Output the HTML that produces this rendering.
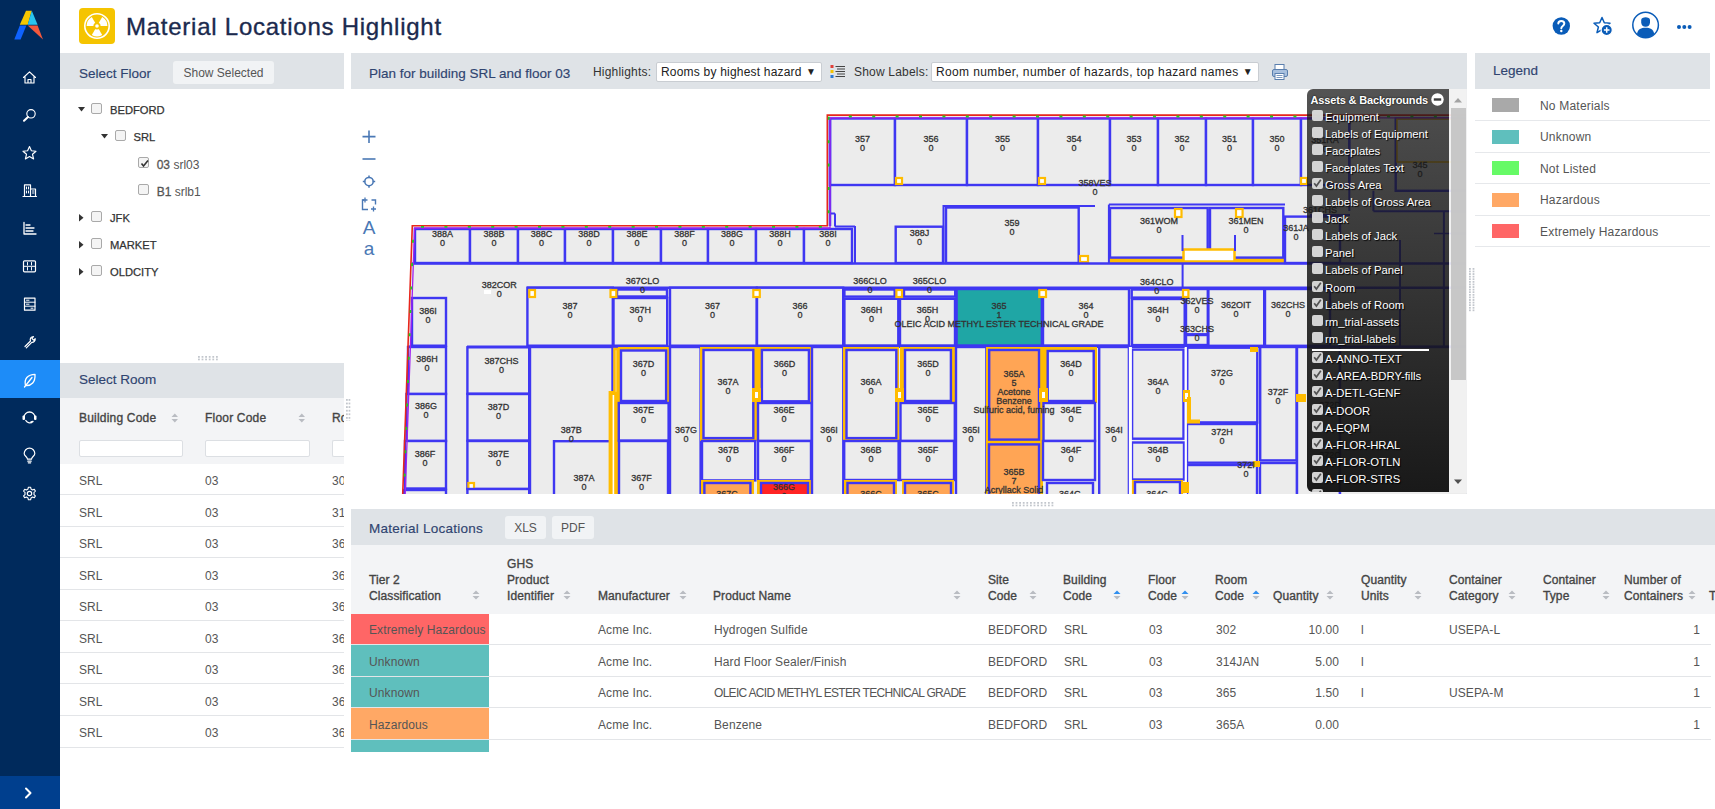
<!DOCTYPE html>
<html><head><meta charset="utf-8">
<style>
*{box-sizing:border-box;margin:0;padding:0}
html,body{width:1715px;height:809px;overflow:hidden;background:#fff;font-family:"Liberation Sans",sans-serif;color:#333;position:relative}
.abs{position:absolute}
#side{left:0;top:0;width:60px;height:809px;background:#002a5c}
#side .act{position:absolute;left:0;top:360px;width:60px;height:38px;background:#1d8cf8}
#side .exp{position:absolute;left:0;top:776px;width:60px;height:33px;background:#003f8e}
.hdr{position:absolute;background:#dfe3e7;height:36px}
.ptitle{position:absolute;font-size:13.5px;color:#2f4470;white-space:nowrap;letter-spacing:0px;-webkit-text-stroke:0.15px #2f4470}
.btn{position:absolute;background:#f1f3f5;border-radius:3px;font-size:12px;color:#555;text-align:center;white-space:nowrap;padding-top:1px}
.t{position:absolute;white-space:nowrap}
.cb{position:absolute;width:11px;height:11px;border:1px solid #a9a9a9;border-radius:2px;background:#f4f4f4}
.tr0{font-size:11.2px;color:#333;-webkit-text-stroke:0.25px #333;letter-spacing:0px;margin-top:1px}
.tr2{font-size:12px;color:#555;margin-top:1px}
.tr2 b{font-weight:normal;-webkit-text-stroke:0.3px #555;color:#555}
.gh{font-size:12px;color:#444;-webkit-text-stroke:0.35px #444;letter-spacing:0.2px}
.gr{font-size:12px;color:#555}
.inp{position:absolute;height:17px;background:#fff;border:1px solid #dcdfe3;border-radius:2px}

.ph{font-size:12px;color:#333;letter-spacing:0.2px}
.sel{position:absolute;height:20px;background:#fff;border:1px solid #c9cdd2;border-radius:2px;font-size:12px;color:#222;line-height:18px;padding-left:4px;white-space:nowrap;letter-spacing:0.2px}
.sel .arr{position:absolute;right:5px;top:0;font-size:10px}
.lg{font-size:12px;color:#555;letter-spacing:0.2px}

.mh{font-size:12px;font-weight:normal;-webkit-text-stroke:0.35px #444;color:#444;letter-spacing:0.1px}
.md{font-size:12px;color:#555;letter-spacing:0.1px}

.ovt{font-size:11px;font-weight:bold;color:#fff;letter-spacing:-0.15px;text-shadow:0 0 2px #000}
.ovi{font-size:11.3px;color:#fff;letter-spacing:0px;text-shadow:1px 1px 1px #000}
.ocb{position:absolute;width:11px;height:11px;background:#dcdcdc;border-radius:2px;opacity:0.95}
.dots{position:absolute;background-image:radial-gradient(circle at 1px 1px,#c2c6cc 0.9px,transparent 1.1px);background-size:3.6px 2.6px}

</style></head><body>
<div id="side" class="abs">
  <svg class="abs" style="left:0;top:0" width="60" height="60">
    <polygon points="26.0,10.7 31.8,10.7 27.7,24.7 19.8,24.7" fill="#f6c700"/>
    <polygon points="31.8,10.7 37.6,24.7 27.7,24.7" fill="#29c4ee"/>
    <polygon points="19.8,25.5 26.4,25.5 20.6,39.6 14.3,39.6" fill="#0f62fe"/>
    <polygon points="27.7,25.5 37.6,25.5 43,39.6" fill="#f4583c"/>
  </svg>
  <div class="act"></div>
  <div class="exp"></div>
  <svg class="abs" style="left:0;top:0" width="60" height="809" fill="none" stroke="#fff" stroke-width="1.15" stroke-linejoin="round" stroke-linecap="round">
    <!-- home -->
    <path d="M23.5,77.5 L29.5,71.8 L35.5,77.5 M25,76.5 V83 H34 V76.5 M28,83 V79.5 H31 V83"/>
    <!-- search -->
    <circle cx="31" cy="113.8" r="4.2"/>
    <path d="M28,117 L24,120.8" stroke-width="2"/>
    <!-- star -->
    <path d="M29.5,146.5 L31.4,150.8 L36,151.2 L32.5,154.3 L33.6,159 L29.5,156.5 L25.4,159 L26.5,154.3 L23,151.2 L27.6,150.8 Z"/>
    <!-- building -->
    <path d="M23,196.5 H36.5 M24.5,196 V184.8 H30.5 V196 M30.5,189 H35.5 V196" stroke-width="1.2"/>
    <path d="M26.5,187 V189 M28.5,187 V189 M26.5,191 V193 M28.5,191 V193 M32.5,191 H34 M32.5,193 H34" stroke-width="1"/>
    <!-- chart -->
    <path d="M24,222.5 V234 H36 M26,225 H30 M26,228 H34 M26,231 H33" stroke-width="1.3"/>
    <!-- grid -->
    <rect x="23.5" y="260.8" width="12" height="11" rx="1" stroke-width="1.2"/>
    <path d="M23.5,266.3 H35.5 M27.5,262.5 V265 M31.5,262.5 V265 M27.5,267.5 V270 M31.5,267.5 V270" stroke-width="1"/>
    <!-- server -->
    <rect x="24.5" y="298.2" width="10.5" height="12" stroke-width="1.2"/>
    <path d="M24.5,302.2 H35 M24.5,306.2 H35 M26.5,300.2 H29 M26.5,304.2 H29 M31,308.2 H33" stroke-width="1"/>
    <!-- wrench -->
    <path d="M25,346.5 L30.5,341 M26.3,347.8 L31.8,342.3 M30.5,341 A3.2,3.2 0 0 1 33.5,336.5 L32,338.6 L33.8,340.2 L35.2,338.6 A3.2,3.2 0 0 1 31.8,342.3" stroke-width="1.2"/>
    <!-- leaf -->
    <path d="M25.5,385.5 C24,379 27.5,374.5 35,374.3 C35.5,382 31.5,386 25.5,385.5 Z M24.5,387 L32,377.5" stroke-width="1.3"/>
    <!-- headset -->
    <path d="M24,417.5 A5.5,5.5 0 0 1 35,417.5 M25.8,420.5 A4.5,4.5 0 0 0 33,421.5 L31,422" stroke-width="1.3"/>
    <rect x="22.5" y="415.5" width="2.5" height="4.5" rx="1" fill="#fff" stroke="none"/>
    <rect x="34" y="415.5" width="2.5" height="4.5" rx="1" fill="#fff" stroke="none"/>
    <!-- bulb -->
    <path d="M27.5,459.2 C27.5,457 24.2,456 24.2,453.5 A5.3,5.3 0 0 1 34.8,453.5 C34.8,456 31.5,457 31.5,459.2 Z M27.8,461.2 H31.2 M28.3,462.8 H30.7" stroke-width="1.2"/>
    <!-- gear -->
    <circle cx="29.5" cy="493.5" r="2.2" stroke-width="1.2"/>
    <path d="M28.4,487.2 H30.6 L31,489 L32.6,489.9 L34.3,489.2 L35.4,491.1 L34,492.3 V494.7 L35.4,495.9 L34.3,497.8 L32.6,497.1 L31,498 L30.6,499.8 H28.4 L28,498 L26.4,497.1 L24.7,497.8 L23.6,495.9 L25,494.7 V492.3 L23.6,491.1 L24.7,489.2 L26.4,489.9 L28,489 Z" stroke-width="1.1"/>
    <!-- chevron -->
    <path d="M26,788.5 L30.5,793 L26,797.5" stroke-width="2"/>
  </svg>
</div>
<!-- header -->
<div class="abs" style="left:79px;top:8px;width:36px;height:36px;background:#f5c400;border-radius:4px"></div>
<div class="t" style="left:126px;top:13px;font-size:24px;color:#1b2a4e;letter-spacing:0.75px;-webkit-text-stroke:0.35px #1b2a4e">Material Locations Highlight</div>


<svg class="abs" style="left:79px;top:8px" width="36" height="36">
  <circle cx="18" cy="18" r="12.2" fill="none" stroke="#fff" stroke-width="1.6"/>
  <path d="M18,18 L23.2,9 A10.4,10.4 0 0 1 28.4,18 Z" fill="#fff" transform="rotate(0 18 18)"/>
  <path d="M18,18 L23.2,9 A10.4,10.4 0 0 1 28.4,18 Z" fill="#fff" transform="rotate(120 18 18)"/>
  <path d="M18,18 L23.2,9 A10.4,10.4 0 0 1 28.4,18 Z" fill="#fff" transform="rotate(240 18 18)"/>
  <circle cx="18" cy="18" r="3.6" fill="#f5c400"/>
  <circle cx="18" cy="18" r="1.8" fill="#fff"/>
</svg>
<svg class="abs" style="left:1540px;top:0" width="175" height="53">
  <circle cx="21.3" cy="26" r="8.7" fill="#0a5cb8"/>
  <path d="M18.3,23.6 C18.3,20 24.3,20 24.3,23.6 C24.3,26 21.3,26 21.3,28.2" fill="none" stroke="#fff" stroke-width="2" stroke-linecap="round"/>
  <circle cx="21.3" cy="31" r="1.2" fill="#fff"/>
  <path d="M62,17.5 L64.3,22.8 L70,23.2 L65.6,27 L67,32.6 L62,29.6 L57,32.6 L58.4,27 L54,23.2 L59.7,22.8 Z" fill="none" stroke="#0a5cb8" stroke-width="1.5" stroke-linejoin="round"/>
  <circle cx="66.7" cy="30" r="5.6" fill="#0a5cb8" stroke="#fff" stroke-width="1.2"/>
  <path d="M66.7,27.2 V32.8 M63.9,30 H69.5" stroke="#fff" stroke-width="1.5"/>
  <circle cx="105.6" cy="25" r="12.8" fill="none" stroke="#0a5cb8" stroke-width="1.5"/>
  <path d="M101.2,20 C101.2,16.2 110,16.2 110,20 L110,22.5 C110,25.3 108,26.8 105.6,26.8 C103.2,26.8 101.2,25.3 101.2,22.5 Z" fill="#0a5cb8"/>
  <path d="M97,34 C98,29 101,27.8 105.6,27.8 C110.2,27.8 113.2,29 114.2,34 A12,12 0 0 1 97,34 Z" fill="#0a5cb8"/>
  <circle cx="139" cy="27" r="2" fill="#0a5cb8"/>
  <circle cx="144.3" cy="27" r="2" fill="#0a5cb8"/>
  <circle cx="149.6" cy="27" r="2" fill="#0a5cb8"/>
</svg>

<!-- Select floor panel -->
<div class="hdr" style="left:60px;top:53px;width:284px"></div>
<div class="ptitle" style="left:79px;top:65.5px">Select Floor</div>
<div class="btn" style="left:173px;top:61px;width:101px;height:23px;line-height:23px">Show Selected</div>

<svg class="abs" style="left:78px;top:107px" width="7" height="5"><path d="M0,0 H7 L3.5,4.5 Z" fill="#333"/></svg><div class="cb" style="left:91px;top:103px"></div><div class="t tr0" style="left:110px;top:103px">BEDFORD</div><svg class="abs" style="left:101px;top:134px" width="7" height="5"><path d="M0,0 H7 L3.5,4.5 Z" fill="#333"/></svg><div class="cb" style="left:114.5px;top:130px"></div><div class="t tr0" style="left:133.5px;top:130px">SRL</div><div class="cb" style="left:138px;top:157px"><svg width="11" height="11" style="position:absolute;left:0;top:0"><path d="M2.5,5.5 L4.5,8 L9,2.5" fill="none" stroke="#333" stroke-width="1.6"/></svg></div><div class="t tr2" style="left:156.7px;top:157px"><b>03</b> srl03</div><div class="cb" style="left:138px;top:184px"></div><div class="t tr2" style="left:156.7px;top:184px"><b>B1</b> srlb1</div><svg class="abs" style="left:79px;top:214px" width="5" height="8"><path d="M0,0 V7.5 L4.5,3.75 Z" fill="#333"/></svg><div class="cb" style="left:91px;top:211px"></div><div class="t tr0" style="left:110px;top:211px">JFK</div><svg class="abs" style="left:79px;top:241px" width="5" height="8"><path d="M0,0 V7.5 L4.5,3.75 Z" fill="#333"/></svg><div class="cb" style="left:91px;top:238px"></div><div class="t tr0" style="left:110px;top:238px">MARKET</div><svg class="abs" style="left:79px;top:268px" width="5" height="8"><path d="M0,0 V7.5 L4.5,3.75 Z" fill="#333"/></svg><div class="cb" style="left:91px;top:265px"></div><div class="t tr0" style="left:110px;top:265px">OLDCITY</div><div class="dots" style="left:198px;top:356px;width:20px;height:5px"></div><div class="dots" style="left:345.5px;top:399px;width:5px;height:22px;background-size:2.6px 3.6px"></div>
<!-- Select room -->
<div class="hdr" style="left:60px;top:363px;width:284px"></div>
<div class="ptitle" style="left:79px;top:372px">Select Room</div>
<div class="abs" style="left:60px;top:398px;width:284px;height:66px;background:#f3f4f6"></div>
<div class="t gh" style="left:79px;top:411px">Building Code</div>
<div class="t gh" style="left:205px;top:411px">Floor Code</div>
<div class="t gh" style="left:332px;top:411px;width:12px;overflow:hidden">Room</div>
<div class="inp" style="left:79px;top:440px;width:104px"></div>
<div class="inp" style="left:205px;top:440px;width:105px"></div>
<div class="inp" style="left:332px;top:440px;width:12px;border-right:none;border-radius:2px 0 0 2px"></div>
<svg class="abs" style="left:170px;top:412px" width="10" height="13"><path d="M1.5,5 L4.8,1.5 L8,5 Z M1.5,7 L4.8,10.5 L8,7 Z" fill="#b9bcc2"/></svg><svg class="abs" style="left:297px;top:412px" width="10" height="13"><path d="M1.5,5 L4.8,1.5 L8,5 Z M1.5,7 L4.8,10.5 L8,7 Z" fill="#b9bcc2"/></svg><div class="abs" style="left:60px;top:494.2px;width:284px;height:1px;background:#e3e5e8"></div><div class="t gr" style="left:79px;top:474.2px">SRL</div><div class="t gr" style="left:205px;top:474.2px">03</div><div class="t gr" style="left:332px;top:474.2px;width:12px;overflow:hidden">30</div><div class="abs" style="left:60px;top:525.8px;width:284px;height:1px;background:#e3e5e8"></div><div class="t gr" style="left:79px;top:505.7px">SRL</div><div class="t gr" style="left:205px;top:505.7px">03</div><div class="t gr" style="left:332px;top:505.7px;width:12px;overflow:hidden">31</div><div class="abs" style="left:60px;top:557.3px;width:284px;height:1px;background:#e3e5e8"></div><div class="t gr" style="left:79px;top:537.3px">SRL</div><div class="t gr" style="left:205px;top:537.3px">03</div><div class="t gr" style="left:332px;top:537.3px;width:12px;overflow:hidden">36</div><div class="abs" style="left:60px;top:588.8px;width:284px;height:1px;background:#e3e5e8"></div><div class="t gr" style="left:79px;top:568.8px">SRL</div><div class="t gr" style="left:205px;top:568.8px">03</div><div class="t gr" style="left:332px;top:568.8px;width:12px;overflow:hidden">36</div><div class="abs" style="left:60px;top:620.3px;width:284px;height:1px;background:#e3e5e8"></div><div class="t gr" style="left:79px;top:600.3px">SRL</div><div class="t gr" style="left:205px;top:600.3px">03</div><div class="t gr" style="left:332px;top:600.3px;width:12px;overflow:hidden">36</div><div class="abs" style="left:60px;top:651.9px;width:284px;height:1px;background:#e3e5e8"></div><div class="t gr" style="left:79px;top:631.8px">SRL</div><div class="t gr" style="left:205px;top:631.8px">03</div><div class="t gr" style="left:332px;top:631.8px;width:12px;overflow:hidden">36</div><div class="abs" style="left:60px;top:683.4px;width:284px;height:1px;background:#e3e5e8"></div><div class="t gr" style="left:79px;top:663.4px">SRL</div><div class="t gr" style="left:205px;top:663.4px">03</div><div class="t gr" style="left:332px;top:663.4px;width:12px;overflow:hidden">36</div><div class="abs" style="left:60px;top:714.9px;width:284px;height:1px;background:#e3e5e8"></div><div class="t gr" style="left:79px;top:694.9px">SRL</div><div class="t gr" style="left:205px;top:694.9px">03</div><div class="t gr" style="left:332px;top:694.9px;width:12px;overflow:hidden">36</div><div class="abs" style="left:60px;top:746.5px;width:284px;height:1px;background:#e3e5e8"></div><div class="t gr" style="left:79px;top:726.4px">SRL</div><div class="t gr" style="left:205px;top:726.4px">03</div><div class="t gr" style="left:332px;top:726.4px;width:12px;overflow:hidden">36</div>

<!-- Plan -->
<div class="hdr" style="left:351px;top:53px;width:1116px"></div>
<div class="ptitle" style="left:369px;top:65.5px">Plan for building SRL and floor 03</div>
<div class="t ph" style="left:593px;top:65px">Highlights:</div>
<div class="sel" style="left:656px;top:62px;width:166px">Rooms by highest hazard<span class="arr">&#9660;</span></div>
<svg class="abs" style="left:830px;top:64px" width="16" height="15">
  <rect x="0.5" y="1" width="3" height="3" fill="#e0413a"/><rect x="0.5" y="6" width="3" height="3" fill="#f5c400"/><rect x="0.5" y="11" width="3" height="3" fill="#2b7bd6"/>
  <path d="M5.5,2.5 H15 M7,5 H15 M5.5,7.5 H15 M7,10 H15 M5.5,12.5 H15" stroke="#444" stroke-width="1.2"/>
</svg>
<div class="t ph" style="left:854px;top:65px">Show Labels:</div>
<div class="sel" style="left:931px;top:62px;width:328px;letter-spacing:0.37px">Room number, number of hazards, top hazard names<span class="arr">&#9660;</span></div>
<svg class="abs" style="left:1271px;top:63px" width="18" height="18">
  <rect x="4" y="1.5" width="9" height="5" fill="#fff" stroke="#5a7fae" stroke-width="1"/>
  <rect x="1.5" y="6.5" width="15" height="7" rx="1.5" fill="#a8c0de" stroke="#5a7fae" stroke-width="1"/>
  <rect x="4" y="10.5" width="9" height="6" fill="#fff" stroke="#5a7fae" stroke-width="1"/>
  <path d="M5.5,12.5 H11.5 M5.5,14.5 H11.5" stroke="#5a7fae" stroke-width="0.8"/>
</svg>



<!-- plan viewport -->
<div id="plan" class="abs" style="left:351px;top:89px;width:1116px;height:404.5px;overflow:hidden;background:#fff">
<svg id="plansvg" class="abs" style="left:0;top:0" width="1116" height="405" viewBox="351 89 1116 405">
<!--PLAN--><polygon points="412.3,225.7 827.3,225.7 827.3,115.1 1470,115.1 1470,500 402.5,500" fill="#ececec"/>
<rect x="830.0" y="118.5" width="65.0" height="66.5" fill="#ececec" stroke="#3f37f2" stroke-width="2.4"/>
<rect x="895.0" y="118.5" width="72.0" height="66.5" fill="#ececec" stroke="#3f37f2" stroke-width="2.4"/>
<rect x="967.0" y="118.5" width="71.0" height="66.5" fill="#ececec" stroke="#3f37f2" stroke-width="2.4"/>
<rect x="1038.0" y="118.5" width="72.0" height="66.5" fill="#ececec" stroke="#3f37f2" stroke-width="2.4"/>
<rect x="1110.0" y="118.5" width="48.0" height="66.5" fill="#ececec" stroke="#3f37f2" stroke-width="2.4"/>
<rect x="1158.0" y="118.5" width="48.0" height="66.5" fill="#ececec" stroke="#3f37f2" stroke-width="2.4"/>
<rect x="1206.0" y="118.5" width="47.0" height="66.5" fill="#ececec" stroke="#3f37f2" stroke-width="2.4"/>
<rect x="1253.0" y="118.5" width="48.0" height="66.5" fill="#ececec" stroke="#3f37f2" stroke-width="2.4"/>
<rect x="1301.0" y="118.5" width="48.3" height="66.5" fill="#ececec" stroke="#3f37f2" stroke-width="2.4"/>
<line x1="1349.3" y1="118.0" x2="1349.3" y2="211.0" stroke="#3f37f2" stroke-width="2"/>
<rect x="1395.7" y="118.5" width="74.3" height="72.3" fill="#ececec" stroke="#3f37f2" stroke-width="2.4"/>
<rect x="1397" y="119" width="80" height="43" fill="none" stroke="#ffbc00" stroke-width="1.5"/>
<line x1="1373.4" y1="211.2" x2="1470.0" y2="211.2" stroke="#3f37f2" stroke-width="2"/>
<line x1="1373.4" y1="190.8" x2="1373.4" y2="211.2" stroke="#3f37f2" stroke-width="2"/>
<line x1="1443.9" y1="211.0" x2="1443.9" y2="500.0" stroke="#3f37f2" stroke-width="2"/>
<line x1="1434.0" y1="233.5" x2="1470.0" y2="233.5" stroke="#3f37f2" stroke-width="1.5"/>
<line x1="1310.0" y1="215.0" x2="1350.0" y2="215.0" stroke="#3f37f2" stroke-width="2"/>
<line x1="1330.0" y1="300.0" x2="1330.0" y2="347.0" stroke="#3f37f2" stroke-width="2"/>
<line x1="1400.0" y1="240.0" x2="1400.0" y2="347.0" stroke="#3f37f2" stroke-width="2"/>
<line x1="1340.0" y1="420.0" x2="1440.0" y2="420.0" stroke="#3f37f2" stroke-width="2"/>
<rect x="1300.0" y="395.0" width="45.0" height="55.0" fill="#ececec" stroke="#3f37f2" stroke-width="2.4"/>
<rect x="1300.0" y="452.0" width="45.0" height="48.0" fill="#ececec" stroke="#3f37f2" stroke-width="2.4"/>
<rect x="896.0" y="178.0" width="6.0" height="6.0" fill="#fff" stroke="#ffbc00" stroke-width="2.2"/>
<rect x="1039.0" y="178.0" width="6.0" height="6.0" fill="#fff" stroke="#ffbc00" stroke-width="2.2"/>
<rect x="1301.0" y="178.0" width="6.0" height="6.0" fill="#fff" stroke="#ffbc00" stroke-width="2.2"/>
<rect x="415.0" y="229.0" width="55.0" height="34.0" fill="#ececec" stroke="#3f37f2" stroke-width="2.4"/>
<rect x="470.0" y="229.0" width="48.0" height="34.0" fill="#ececec" stroke="#3f37f2" stroke-width="2.4"/>
<rect x="518.0" y="229.0" width="47.0" height="34.0" fill="#ececec" stroke="#3f37f2" stroke-width="2.4"/>
<rect x="565.0" y="229.0" width="48.0" height="34.0" fill="#ececec" stroke="#3f37f2" stroke-width="2.4"/>
<rect x="613.0" y="229.0" width="48.0" height="34.0" fill="#ececec" stroke="#3f37f2" stroke-width="2.4"/>
<rect x="661.0" y="229.0" width="47.0" height="34.0" fill="#ececec" stroke="#3f37f2" stroke-width="2.4"/>
<rect x="708.0" y="229.0" width="48.0" height="34.0" fill="#ececec" stroke="#3f37f2" stroke-width="2.4"/>
<rect x="756.0" y="229.0" width="48.0" height="34.0" fill="#ececec" stroke="#3f37f2" stroke-width="2.4"/>
<rect x="804.0" y="229.0" width="48.0" height="34.0" fill="#ececec" stroke="#3f37f2" stroke-width="2.4"/>
<line x1="855.0" y1="226.0" x2="855.0" y2="263.0" stroke="#3f37f2" stroke-width="2"/>
<line x1="830.0" y1="213.5" x2="835.0" y2="213.5" stroke="#3f37f2" stroke-width="2"/>
<line x1="835.0" y1="213.5" x2="835.0" y2="226.5" stroke="#3f37f2" stroke-width="2"/>
<line x1="835.0" y1="226.5" x2="855.0" y2="226.5" stroke="#3f37f2" stroke-width="2"/>
<line x1="943.5" y1="205.0" x2="943.5" y2="263.0" stroke="#3f37f2" stroke-width="2"/>
<line x1="830.0" y1="118.0" x2="830.0" y2="226.0" stroke="#3f37f2" stroke-width="2.5"/>
<rect x="895.7" y="226.7" width="47.3" height="36.3" fill="#ececec" stroke="#3f37f2" stroke-width="2.4"/>
<rect x="946.0" y="207.5" width="132.7" height="55.5" fill="#ececec" stroke="#3f37f2" stroke-width="2.4"/>
<line x1="943.0" y1="206.0" x2="1095.0" y2="206.0" stroke="#3f37f2" stroke-width="2"/>
<rect x="1080.0" y="256.0" width="8.0" height="6.0" fill="#fff" stroke="#ffbc00" stroke-width="2.2"/>
<rect x="1108.9" y="256.0" width="176.1" height="7.0" fill="#ffbc00"/>
<rect x="1110.0" y="208.0" width="97.7" height="49.6" fill="#ececec" stroke="#3f37f2" stroke-width="2.4"/>
<rect x="1210.0" y="208.0" width="73.3" height="49.6" fill="#ececec" stroke="#3f37f2" stroke-width="2.4"/>
<line x1="1108.9" y1="204.6" x2="1285.0" y2="204.6" stroke="#3f37f2" stroke-width="2"/>
<line x1="1108.9" y1="204.6" x2="1108.9" y2="263.0" stroke="#3f37f2" stroke-width="2"/>
<rect x="1183.0" y="250.0" width="52.0" height="11.0" fill="#fff"/>
<rect x="1183.5" y="249.5" width="51" height="12" fill="#fff" stroke="#ffbc00" stroke-width="2.5"/>
<rect x="1175.0" y="209.0" width="6.5" height="8.0" fill="#fff" stroke="#ffbc00" stroke-width="2.2"/>
<rect x="1236.0" y="209.0" width="6.6" height="8.0" fill="#fff" stroke="#ffbc00" stroke-width="2.2"/>
<line x1="1182.5" y1="235.0" x2="1182.5" y2="251.0" stroke="#3f37f2" stroke-width="2"/>
<line x1="1235.0" y1="235.0" x2="1235.0" y2="251.0" stroke="#3f37f2" stroke-width="2"/>
<rect x="1285.0" y="216.6" width="55.0" height="46.4" fill="#ececec" stroke="#3f37f2" stroke-width="2.4"/>
<line x1="1182.6" y1="263.0" x2="1182.6" y2="288.0" stroke="#3f37f2" stroke-width="2"/>
<line x1="412.0" y1="263.5" x2="1470.0" y2="263.5" stroke="#3f37f2" stroke-width="2.5"/>
<rect x="484" y="290" width="7" height="4" fill="#fff"/>
<line x1="527.0" y1="287.7" x2="1470.0" y2="287.7" stroke="#3f37f2" stroke-width="2.5"/>
<rect x="412.0" y="298.0" width="34.0" height="47.7" fill="#ececec" stroke="#3f37f2" stroke-width="2.4"/>
<rect x="527.4" y="287.7" width="85.4" height="58.0" fill="#ececec" stroke="#3f37f2" stroke-width="2.4"/>
<rect x="617.0" y="289.5" width="50.0" height="7.0" fill="#ececec" stroke="#3f37f2" stroke-width="2.4"/>
<rect x="613.5" y="298.0" width="53.7" height="47.7" fill="#ececec" stroke="#3f37f2" stroke-width="2.4"/>
<rect x="670.0" y="287.7" width="86.7" height="58.0" fill="#ececec" stroke="#3f37f2" stroke-width="2.4"/>
<rect x="757.0" y="287.7" width="86.2" height="58.0" fill="#ececec" stroke="#3f37f2" stroke-width="2.4"/>
<rect x="844.4" y="289.5" width="50.3" height="7.1" fill="#ececec" stroke="#3f37f2" stroke-width="2.4"/>
<rect x="844.4" y="298.8" width="53.9" height="46.7" fill="#ececec" stroke="#3f37f2" stroke-width="2.4"/>
<rect x="904.0" y="289.5" width="51.2" height="7.1" fill="#ececec" stroke="#3f37f2" stroke-width="2.4"/>
<rect x="900.0" y="298.8" width="55.0" height="46.7" fill="#ececec" stroke="#3f37f2" stroke-width="2.4"/>
<rect x="956.6" y="289.0" width="85.3" height="56.5" fill="#1fa6a5" stroke="#3f37f2" stroke-width="2.4"/>
<rect x="1043.0" y="289.0" width="86.0" height="56.5" fill="#ececec" stroke="#3f37f2" stroke-width="2.4"/>
<rect x="1131.7" y="289.5" width="51.6" height="8.1" fill="#ececec" stroke="#3f37f2" stroke-width="2.4"/>
<rect x="1132.0" y="299.0" width="52.7" height="46.1" fill="#ececec" stroke="#3f37f2" stroke-width="2.4"/>
<rect x="1186.0" y="289.0" width="21.8" height="45.3" fill="#ececec" stroke="#3f37f2" stroke-width="2.4"/>
<rect x="1186.0" y="335.0" width="21.8" height="10.0" fill="#ececec" stroke="#3f37f2" stroke-width="2.4"/>
<rect x="1208.4" y="289.0" width="55.8" height="56.8" fill="#ececec" stroke="#3f37f2" stroke-width="2.4"/>
<rect x="1265.0" y="289.0" width="65.0" height="56.8" fill="#ececec" stroke="#3f37f2" stroke-width="2.4"/>
<rect x="529.3" y="290.0" width="5.7" height="7.0" fill="#fff" stroke="#ffbc00" stroke-width="2.2"/>
<rect x="610.5" y="290.0" width="5.8" height="7.0" fill="#fff" stroke="#ffbc00" stroke-width="2.2"/>
<rect x="753.3" y="290.0" width="6.5" height="7.0" fill="#fff" stroke="#ffbc00" stroke-width="2.2"/>
<rect x="896.4" y="290.0" width="5.6" height="7.0" fill="#fff" stroke="#ffbc00" stroke-width="2.2"/>
<rect x="1039.3" y="290.0" width="6.7" height="7.0" fill="#fff" stroke="#ffbc00" stroke-width="2.2"/>
<rect x="1183.0" y="290.0" width="5.4" height="7.0" fill="#fff" stroke="#ffbc00" stroke-width="2.2"/>
<line x1="408.0" y1="346.7" x2="446.0" y2="346.7" stroke="#3f37f2" stroke-width="2.5"/>
<line x1="467.0" y1="346.7" x2="1470.0" y2="346.7" stroke="#3f37f2" stroke-width="2.5"/>
<rect x="408.0" y="347.0" width="38.0" height="47.0" fill="#ececec" stroke="#3f37f2" stroke-width="2.4"/>
<rect x="406.5" y="394.0" width="39.5" height="47.0" fill="#ececec" stroke="#3f37f2" stroke-width="2.4"/>
<rect x="405.0" y="441.0" width="41.0" height="47.5" fill="#ececec" stroke="#3f37f2" stroke-width="2.4"/>
<rect x="404.0" y="490.0" width="42.0" height="10.0" fill="#ececec" stroke="#3f37f2" stroke-width="2.4"/>
<rect x="467.4" y="347.3" width="61.8" height="46.4" fill="#ececec" stroke="#3f37f2" stroke-width="2.4"/>
<rect x="467.4" y="394.0" width="61.8" height="46.6" fill="#ececec" stroke="#3f37f2" stroke-width="2.4"/>
<rect x="467.4" y="441.0" width="61.8" height="48.0" fill="#ececec" stroke="#3f37f2" stroke-width="2.4"/>
<rect x="468.4" y="483.0" width="5.6" height="9.0" fill="#fff" stroke="#ffbc00" stroke-width="2.2"/>
<rect x="467.4" y="489.0" width="61.8" height="11.0" fill="#ececec" stroke="#3f37f2" stroke-width="2.4"/>
<rect x="530.0" y="347.0" width="82.5" height="153.0" fill="#ececec" stroke="#3f37f2" stroke-width="2.4"/>
<rect x="554.0" y="441.2" width="58.0" height="58.8" fill="#ececec" stroke="#3f37f2" stroke-width="2.4"/>
<rect x="610.6" y="393" width="5.6" height="110" fill="#fff" stroke="#ffbc00" stroke-width="4"/>
<rect x="614.5" y="349" width="3" height="44" fill="#fff" stroke="#ffbc00" stroke-width="2.5"/>
<rect x="620.0" y="349.0" width="48.0" height="52.0" fill="none" stroke="#ffbc00" stroke-width="4"/>
<rect x="621.0" y="350.5" width="45.1" height="50.5" fill="#ececec" stroke="#3f37f2" stroke-width="2.4"/>
<rect x="618.8" y="403.0" width="49.8" height="37.6" fill="#ececec" stroke="#3f37f2" stroke-width="2.4"/>
<rect x="619.0" y="441.0" width="49.0" height="59.0" fill="#ececec" stroke="#3f37f2" stroke-width="2.4"/>
<rect x="670.0" y="347.0" width="30.6" height="153.0" fill="#ececec" stroke="#3f37f2" stroke-width="2.4"/>
<rect x="702.0" y="349.0" width="53.0" height="90.0" fill="none" stroke="#ffbc00" stroke-width="4"/>
<rect x="703.5" y="350.0" width="49.8" height="88.1" fill="#ececec" stroke="#3f37f2" stroke-width="2.4"/>
<rect x="759.0" y="349.0" width="51.0" height="52.0" fill="none" stroke="#ffbc00" stroke-width="4"/>
<rect x="761.9" y="350.0" width="47.0" height="51.3" fill="#ececec" stroke="#3f37f2" stroke-width="2.4"/>
<rect x="758.0" y="403.0" width="53.7" height="38.0" fill="#ececec" stroke="#3f37f2" stroke-width="2.4"/>
<rect x="702.0" y="441.0" width="53.2" height="39.4" fill="#ececec" stroke="#3f37f2" stroke-width="2.4"/>
<rect x="758.0" y="441.0" width="53.0" height="39.4" fill="#ececec" stroke="#3f37f2" stroke-width="2.4"/>
<rect x="703.0" y="482.0" width="49.0" height="16.0" fill="none" stroke="#ffbc00" stroke-width="4"/>
<rect x="704.4" y="483.0" width="46.0" height="17.0" fill="#ffa555" stroke="#3f37f2" stroke-width="2.4"/>
<rect x="759.0" y="482.0" width="51.0" height="16.0" fill="none" stroke="#ffbc00" stroke-width="4"/>
<rect x="761.0" y="483.0" width="47.0" height="17.0" fill="#ff2424" stroke="#3f37f2" stroke-width="2.4"/>
<rect x="812.0" y="347.0" width="31.3" height="153.0" fill="#ececec" stroke="#3f37f2" stroke-width="2.4"/>
<rect x="845.0" y="349.0" width="52.0" height="90.0" fill="none" stroke="#ffbc00" stroke-width="4"/>
<rect x="846.5" y="350.0" width="49.8" height="88.1" fill="#ececec" stroke="#3f37f2" stroke-width="2.4"/>
<rect x="902.0" y="349.0" width="52.0" height="52.0" fill="none" stroke="#ffbc00" stroke-width="4"/>
<rect x="905.0" y="350.0" width="45.9" height="51.0" fill="#ececec" stroke="#3f37f2" stroke-width="2.4"/>
<rect x="900.5" y="403.0" width="54.3" height="38.0" fill="#ececec" stroke="#3f37f2" stroke-width="2.4"/>
<rect x="844.2" y="441.0" width="54.4" height="39.0" fill="#ececec" stroke="#3f37f2" stroke-width="2.4"/>
<rect x="900.0" y="441.0" width="54.0" height="39.0" fill="#ececec" stroke="#3f37f2" stroke-width="2.4"/>
<rect x="846.0" y="482.0" width="49.0" height="16.0" fill="none" stroke="#ffbc00" stroke-width="4"/>
<rect x="847.5" y="483.0" width="46.5" height="17.0" fill="#ffa555" stroke="#3f37f2" stroke-width="2.4"/>
<rect x="904.0" y="482.0" width="48.0" height="16.0" fill="none" stroke="#ffbc00" stroke-width="4"/>
<rect x="905.0" y="483.0" width="46.0" height="17.0" fill="#ffa555" stroke="#3f37f2" stroke-width="2.4"/>
<rect x="956.0" y="347.0" width="30.4" height="153.0" fill="#ececec" stroke="#3f37f2" stroke-width="2.4"/>
<rect x="988.0" y="349.0" width="53.0" height="90.0" fill="none" stroke="#ffbc00" stroke-width="4"/>
<rect x="989.2" y="350.0" width="49.8" height="89.6" fill="#ffa555" stroke="#3f37f2" stroke-width="2.4"/>
<rect x="988.0" y="443.0" width="53.0" height="55.0" fill="none" stroke="#ffbc00" stroke-width="4"/>
<rect x="989.0" y="444.4" width="50.0" height="55.6" fill="#ffa555" stroke="#3f37f2" stroke-width="2.4"/>
<rect x="1045.0" y="349.0" width="50.0" height="52.0" fill="none" stroke="#ffbc00" stroke-width="4"/>
<rect x="1047.7" y="351.0" width="46.0" height="50.0" fill="#ececec" stroke="#3f37f2" stroke-width="2.4"/>
<rect x="1043.5" y="403.0" width="51.5" height="38.0" fill="#ececec" stroke="#3f37f2" stroke-width="2.4"/>
<rect x="1043.0" y="441.0" width="52.0" height="39.0" fill="#ececec" stroke="#3f37f2" stroke-width="2.4"/>
<rect x="1047.0" y="483.0" width="46.0" height="17.0" fill="#ececec" stroke="#3f37f2" stroke-width="2.4"/>
<rect x="1099.2" y="347.0" width="29.7" height="153.0" fill="#ececec" stroke="#3f37f2" stroke-width="2.4"/>
<rect x="1132.1" y="349.6" width="51.4" height="89.1" fill="#ececec" stroke="#3f37f2" stroke-width="2.4"/>
<rect x="1132.0" y="442.5" width="52.0" height="37.0" fill="#ececec" stroke="#3f37f2" stroke-width="2.4"/>
<rect x="1133.0" y="482.0" width="48.0" height="16.0" fill="none" stroke="#ffbc00" stroke-width="4"/>
<rect x="1135.0" y="482.0" width="45.0" height="18.0" fill="#ececec" stroke="#3f37f2" stroke-width="2.4"/>
<rect x="1187.3" y="347.7" width="70.0" height="74.7" fill="#ececec" stroke="#3f37f2" stroke-width="2.4"/>
<rect x="1187.0" y="424.0" width="70.0" height="38.7" fill="#ececec" stroke="#3f37f2" stroke-width="2.4"/>
<rect x="1187.0" y="465.0" width="70.0" height="35.0" fill="#ececec" stroke="#3f37f2" stroke-width="2.4"/>
<rect x="1260.2" y="347.0" width="36.4" height="113.4" fill="#ececec" stroke="#3f37f2" stroke-width="2.4"/>
<rect x="1260.0" y="463.0" width="37.0" height="37.0" fill="#ececec" stroke="#3f37f2" stroke-width="2.4"/>
<rect x="1297.0" y="347.0" width="43.0" height="153.0" fill="#ececec" stroke="#3f37f2" stroke-width="2.4"/>
<rect x="1340.0" y="347.0" width="130.0" height="153.0" fill="#ececec" stroke="#3f37f2" stroke-width="2.4"/>
<rect x="1128.9" y="347.0" width="3.0" height="153.0" fill="#fff"/>
<rect x="1184.7" y="347.0" width="2.2" height="153.0" fill="#fff"/>
<rect x="1183.0" y="390.0" width="7.0" height="12.0" fill="#ffbc00"/>
<rect x="1185.0" y="393.0" width="3.0" height="6.0" fill="#fff"/>
<rect x="1187.0" y="397.0" width="4.0" height="26.0" fill="#ffbc00"/>
<rect x="1187.0" y="419.5" width="13.0" height="4.0" fill="#ffbc00"/>
<rect x="1250.0" y="347.0" width="8.0" height="5.0" fill="#ffbc00"/>
<rect x="1253.0" y="461.0" width="7.0" height="6.0" fill="#ffbc00"/>
<rect x="1181.0" y="482.0" width="8.0" height="11.0" fill="#ffbc00"/>
<rect x="1296.0" y="394.0" width="10.0" height="8.0" fill="#ffbc00"/>
<rect x="752.0" y="388.0" width="9.0" height="14.0" fill="#ffbc00"/>
<rect x="755.0" y="392.0" width="3.0" height="6.0" fill="#fff"/>
<rect x="895.0" y="388.0" width="9.0" height="14.0" fill="#ffbc00"/>
<rect x="898.0" y="392.0" width="3.0" height="6.0" fill="#fff"/>
<rect x="1039.0" y="388.0" width="9.0" height="14.0" fill="#ffbc00"/>
<rect x="1042.0" y="392.0" width="3.0" height="6.0" fill="#fff"/>
<polyline points="402.5,500 412.3,225.7 827.3,225.7 827.3,115.1 1470,115.1" fill="none" stroke="#e8261c" stroke-width="1.6"/>
<polyline points="405,500 414.6,228 830,228 830,117.8 1470,117.8" fill="none" stroke="#a020f0" stroke-width="1.3"/>
<polyline points="403.8,500 413.5,226.9 828.7,226.9 828.7,116.5 1470,116.5" fill="none" stroke="#1fcf1f" stroke-width="1.8" stroke-dasharray="3,20.4"/>
<g font-family="Liberation Sans" font-size="9" fill="#333" text-anchor="middle" stroke="#333" stroke-width="0.3"><text x="862.5" y="142.3">357</text>
<text x="862.5" y="151.3">0</text>
<text x="931.0" y="142.3">356</text>
<text x="931.0" y="151.3">0</text>
<text x="1002.5" y="142.3">355</text>
<text x="1002.5" y="151.3">0</text>
<text x="1074.0" y="142.3">354</text>
<text x="1074.0" y="151.3">0</text>
<text x="1134.0" y="142.3">353</text>
<text x="1134.0" y="151.3">0</text>
<text x="1182.0" y="142.3">352</text>
<text x="1182.0" y="151.3">0</text>
<text x="1229.5" y="142.3">351</text>
<text x="1229.5" y="151.3">0</text>
<text x="1277.0" y="142.3">350</text>
<text x="1277.0" y="151.3">0</text>
<text x="1330.0" y="408.3">372D</text>
<text x="1330.0" y="417.3">0</text>
<text x="1330.0" y="458.3">372C</text>
<text x="1330.0" y="467.3">0</text>
<text x="1325.0" y="143.3">351RA</text>
<text x="1325.0" y="152.3">0</text>
<text x="1420.0" y="168.3">345</text>
<text x="1420.0" y="177.3">0</text>
<text x="1320.0" y="213.3">361CHS</text>
<text x="1320.0" y="222.3">0</text>
<text x="1095.0" y="185.6">358VES</text>
<text x="1095.0" y="195.0">0</text>
<text x="442.5" y="237.0">388A</text>
<text x="442.5" y="246.0">0</text>
<text x="494.0" y="237.0">388B</text>
<text x="494.0" y="246.0">0</text>
<text x="541.5" y="237.0">388C</text>
<text x="541.5" y="246.0">0</text>
<text x="589.0" y="237.0">388D</text>
<text x="589.0" y="246.0">0</text>
<text x="637.0" y="237.0">388E</text>
<text x="637.0" y="246.0">0</text>
<text x="684.5" y="237.0">388F</text>
<text x="684.5" y="246.0">0</text>
<text x="732.0" y="237.0">388G</text>
<text x="732.0" y="246.0">0</text>
<text x="780.0" y="237.0">388H</text>
<text x="780.0" y="246.0">0</text>
<text x="828.0" y="237.0">388I</text>
<text x="828.0" y="246.0">0</text>
<text x="919.5" y="235.8">388J</text>
<text x="919.5" y="245.3">0</text>
<text x="1012.0" y="225.8">359</text>
<text x="1012.0" y="235.3">0</text>
<text x="1159.0" y="224.3">361WOM</text>
<text x="1159.0" y="233.3">0</text>
<text x="1246.0" y="224.3">361MEN</text>
<text x="1246.0" y="233.3">0</text>
<text x="1296.0" y="230.7">361JA</text>
<text x="1296.0" y="239.7">0</text>
<text x="499.2" y="288.4">382COR</text>
<text x="499.2" y="297.1">0</text>
<text x="642.4" y="283.7">367CLO</text>
<text x="642.4" y="292.7">0</text>
<text x="869.9" y="283.6">366CLO</text>
<text x="869.9" y="292.8">0</text>
<text x="929.6" y="283.6">365CLO</text>
<text x="929.6" y="292.8">0</text>
<text x="1156.8" y="284.6">364CLO</text>
<text x="1156.8" y="293.7">0</text>
<text x="428.0" y="314.4">386I</text>
<text x="428.0" y="323.0">0</text>
<text x="570.0" y="309.2">387</text>
<text x="570.0" y="318.2">0</text>
<text x="640.3" y="313.2">367H</text>
<text x="640.3" y="322.2">0</text>
<text x="712.6" y="308.8">367</text>
<text x="712.6" y="317.8">0</text>
<text x="800.0" y="308.8">366</text>
<text x="800.0" y="317.8">0</text>
<text x="871.5" y="313.3">366H</text>
<text x="871.5" y="322.3">0</text>
<text x="927.5" y="313.3">365H</text>
<text x="927.5" y="322.3">0</text>
<text x="999.0" y="308.8">365</text>
<text x="999.0" y="317.8">1</text>
<text x="1086.0" y="308.8">364</text>
<text x="1086.0" y="317.8">0</text>
<text x="1158.0" y="313.3">364H</text>
<text x="1158.0" y="322.3">0</text>
<text x="1197.0" y="303.8">362VES</text>
<text x="1197.0" y="312.8">0</text>
<text x="1197.0" y="331.8">363CHS</text>
<text x="1197.0" y="340.8">0</text>
<text x="1236.0" y="308.1">362OIT</text>
<text x="1236.0" y="317.0">0</text>
<text x="1288.0" y="308.1">362CHS</text>
<text x="1288.0" y="317.0">0</text>
<text x="999" y="326.8">OLEIC ACID METHYL ESTER TECHNICAL GRADE</text>
<text x="427.0" y="361.9">386H</text>
<text x="427.0" y="371.1">0</text>
<text x="426.0" y="409.3">386G</text>
<text x="426.0" y="418.3">0</text>
<text x="425.0" y="456.8">386F</text>
<text x="425.0" y="465.9">0</text>
<text x="501.5" y="363.8">387CHS</text>
<text x="501.5" y="372.8">0</text>
<text x="498.6" y="409.7">387D</text>
<text x="498.6" y="418.7">0</text>
<text x="498.6" y="457.3">387E</text>
<text x="498.6" y="466.3">0</text>
<text x="571.3" y="433.0">387B</text>
<text x="571.3" y="442.0">0</text>
<text x="584.0" y="480.8">387A</text>
<text x="584.0" y="489.9">0</text>
<text x="643.5" y="367.3">367D</text>
<text x="643.5" y="376.3">0</text>
<text x="643.5" y="413.3">367E</text>
<text x="643.5" y="422.8">0</text>
<text x="641.5" y="480.8">367F</text>
<text x="641.5" y="489.9">0</text>
<text x="686.0" y="433.3">367G</text>
<text x="686.0" y="442.3">0</text>
<text x="728.0" y="385.3">367A</text>
<text x="728.0" y="394.3">0</text>
<text x="784.6" y="367.3">366D</text>
<text x="784.6" y="376.3">0</text>
<text x="784.0" y="413.3">366E</text>
<text x="784.0" y="422.3">0</text>
<text x="728.5" y="453.3">367B</text>
<text x="728.5" y="462.3">0</text>
<text x="784.0" y="453.3">366F</text>
<text x="784.0" y="462.3">0</text>
<text x="727.0" y="497.1">367C</text>
<text x="727.0" y="506.3">0</text>
<text x="784.0" y="490.3">366G</text>
<text x="784.0" y="499.3">0</text>
<text x="829.0" y="433.3">366I</text>
<text x="829.0" y="442.3">0</text>
<text x="871.0" y="385.3">366A</text>
<text x="871.0" y="394.3">0</text>
<text x="928.0" y="367.3">365D</text>
<text x="928.0" y="376.3">0</text>
<text x="928.0" y="413.3">365E</text>
<text x="928.0" y="422.3">0</text>
<text x="871.0" y="453.3">366B</text>
<text x="871.0" y="462.3">0</text>
<text x="928.0" y="453.3">365F</text>
<text x="928.0" y="462.3">0</text>
<text x="871.0" y="497.3">366C</text>
<text x="871.0" y="506.3">0</text>
<text x="928.0" y="497.3">365C</text>
<text x="928.0" y="506.3">0</text>
<text x="971.0" y="433.3">365I</text>
<text x="971.0" y="442.3">0</text>
<text x="1014.0" y="377.3">365A</text>
<text x="1014.0" y="386.3">5</text>
<text x="1014.0" y="395.3">Acetone</text>
<text x="1014.0" y="404.3">Benzene</text>
<text x="1014.0" y="474.8">365B</text>
<text x="1014.0" y="484.0">7</text>
<text x="1071.0" y="367.3">364D</text>
<text x="1071.0" y="376.3">0</text>
<text x="1071.0" y="413.3">364E</text>
<text x="1071.0" y="422.3">0</text>
<text x="1071.0" y="453.3">364F</text>
<text x="1071.0" y="462.3">0</text>
<text x="1070.0" y="497.3">364G</text>
<text x="1070.0" y="506.3">0</text>
<text x="1114.0" y="433.3">364I</text>
<text x="1114.0" y="442.3">0</text>
<text x="1158.0" y="385.3">364A</text>
<text x="1158.0" y="394.3">0</text>
<text x="1158.0" y="453.3">364B</text>
<text x="1158.0" y="462.3">0</text>
<text x="1157.0" y="497.3">364C</text>
<text x="1157.0" y="506.3">0</text>
<text x="1222.0" y="376.3">372G</text>
<text x="1222.0" y="385.3">0</text>
<text x="1222.0" y="435.3">372H</text>
<text x="1222.0" y="444.3">0</text>
<text x="1246.0" y="467.9">372I</text>
<text x="1246.0" y="476.9">0</text>
<text x="1278.0" y="395.0">372F</text>
<text x="1278.0" y="404.3">0</text>
<text x="1014" y="413.3">Sulfuric acid, fuming</text>
<text x="1014" y="492.8">Acryllack Solid</text></g><!--/PLAN-->
</svg>
</div>

<svg class="abs" style="left:355px;top:120px" width="30" height="140" fill="none" stroke="#4a78b5" stroke-width="1.6">
  <path d="M14,10.5 V23 M7.5,16.6 H20.5"/>
  <path d="M7.5,39 H20.5"/>
  <circle cx="14" cy="61.6" r="4.2" stroke-width="1.5"/>
  <path d="M14,55.5 V58 M14,65.3 V67.8 M7.8,61.6 H10.3 M17.7,61.6 H20.2" stroke-width="1.5"/>
  <path d="M9,80 H7.5 V89.5 H13 M16.5,80 H20.5 V84.5" stroke-width="1.4"/>
  <path d="M10,77.5 V82.5 M7.5,80 H12.5 M18.5,86.5 V91.5 M16,89 H21" stroke-width="1.3"/>
  <text x="14" y="114" font-family="Liberation Sans" font-size="19" fill="#4a78b5" stroke="none" text-anchor="middle">A</text>
  <text x="14" y="135" font-family="Liberation Sans" font-size="19" fill="#4a78b5" stroke="none" text-anchor="middle">a</text>
</svg>
<div class="abs" style="left:1466px;top:89px;width:1px;height:405px;background:#e4e6e9"></div>
<div class="abs" style="left:1449px;top:89px;width:18px;height:404px;background:rgba(241,241,241,0.92)"></div>
<div class="abs" style="left:1450.5px;top:108px;width:15.5px;height:272px;background:rgba(196,196,196,0.95)"></div>
<svg class="abs" style="left:1450px;top:94px" width="16" height="12"><path d="M4,8.5 L8,4 L12,8.5 Z" fill="#a3a3a3"/></svg>
<svg class="abs" style="left:1450px;top:476px" width="16" height="12"><path d="M4,3.5 L8,8 L12,3.5 Z" fill="#505050"/></svg>
<div id="ovl" class="abs" style="left:1307px;top:89px;width:142px;height:403px;border-radius:6px 0 0 6px;background:linear-gradient(rgba(24,24,24,0.74),rgba(18,18,18,0.97));overflow:hidden">
<div class="t ovt" style="left:3.5px;top:5px">Assets &amp; Backgrounds</div>
<svg class="abs" style="left:124px;top:4px" width="13" height="13"><circle cx="6.5" cy="6.5" r="6.2" fill="#fff"/><rect x="2.8" y="5.3" width="7.4" height="2.4" fill="#3c3c3c"/></svg>
<div class="ocb" style="left:5px;top:20.5px"></div><div class="t ovi" style="left:18px;top:21.5px">Equipment</div><div class="ocb" style="left:5px;top:37.6px"></div><div class="t ovi" style="left:18px;top:38.6px">Labels of Equipment</div><div class="ocb" style="left:5px;top:54.7px"></div><div class="t ovi" style="left:18px;top:55.7px">Faceplates</div><div class="ocb" style="left:5px;top:71.8px"></div><div class="t ovi" style="left:18px;top:72.8px">Faceplates Text</div><div class="ocb" style="left:5px;top:88.9px"><svg width="11" height="11" style="position:absolute;left:0;top:0"><path d="M2.2,5.2 L4.4,8 L8.8,1.8" fill="none" stroke="#555" stroke-width="1.7"/></svg></div><div class="t ovi" style="left:18px;top:89.9px">Gross Area</div><div class="ocb" style="left:5px;top:106.0px"></div><div class="t ovi" style="left:18px;top:107.0px">Labels of Gross Area</div><div class="ocb" style="left:5px;top:123.1px"></div><div class="t ovi" style="left:18px;top:124.1px">Jack</div><div class="ocb" style="left:5px;top:140.2px"></div><div class="t ovi" style="left:18px;top:141.2px">Labels of Jack</div><div class="ocb" style="left:5px;top:157.3px"></div><div class="t ovi" style="left:18px;top:158.3px">Panel</div><div class="ocb" style="left:5px;top:174.4px"></div><div class="t ovi" style="left:18px;top:175.4px">Labels of Panel</div><div class="ocb" style="left:5px;top:191.5px"><svg width="11" height="11" style="position:absolute;left:0;top:0"><path d="M2.2,5.2 L4.4,8 L8.8,1.8" fill="none" stroke="#555" stroke-width="1.7"/></svg></div><div class="t ovi" style="left:18px;top:192.5px">Room</div><div class="ocb" style="left:5px;top:208.6px"><svg width="11" height="11" style="position:absolute;left:0;top:0"><path d="M2.2,5.2 L4.4,8 L8.8,1.8" fill="none" stroke="#555" stroke-width="1.7"/></svg></div><div class="t ovi" style="left:18px;top:209.6px">Labels of Room</div><div class="ocb" style="left:5px;top:225.7px"></div><div class="t ovi" style="left:18px;top:226.7px">rm_trial-assets</div><div class="ocb" style="left:5px;top:242.8px"></div><div class="t ovi" style="left:18px;top:243.8px">rm_trial-labels</div><div class="ocb" style="left:5px;top:263.2px"><svg width="11" height="11" style="position:absolute;left:0;top:0"><path d="M2.2,5.2 L4.4,8 L8.8,1.8" fill="none" stroke="#555" stroke-width="1.7"/></svg></div><div class="t ovi" style="left:18px;top:264.2px">A-ANNO-TEXT</div><div class="ocb" style="left:5px;top:280.3px"><svg width="11" height="11" style="position:absolute;left:0;top:0"><path d="M2.2,5.2 L4.4,8 L8.8,1.8" fill="none" stroke="#555" stroke-width="1.7"/></svg></div><div class="t ovi" style="left:18px;top:281.3px">A-AREA-BDRY-fills</div><div class="ocb" style="left:5px;top:297.4px"><svg width="11" height="11" style="position:absolute;left:0;top:0"><path d="M2.2,5.2 L4.4,8 L8.8,1.8" fill="none" stroke="#555" stroke-width="1.7"/></svg></div><div class="t ovi" style="left:18px;top:298.4px">A-DETL-GENF</div><div class="ocb" style="left:5px;top:314.5px"><svg width="11" height="11" style="position:absolute;left:0;top:0"><path d="M2.2,5.2 L4.4,8 L8.8,1.8" fill="none" stroke="#555" stroke-width="1.7"/></svg></div><div class="t ovi" style="left:18px;top:315.5px">A-DOOR</div><div class="ocb" style="left:5px;top:331.6px"><svg width="11" height="11" style="position:absolute;left:0;top:0"><path d="M2.2,5.2 L4.4,8 L8.8,1.8" fill="none" stroke="#555" stroke-width="1.7"/></svg></div><div class="t ovi" style="left:18px;top:332.6px">A-EQPM</div><div class="ocb" style="left:5px;top:348.7px"><svg width="11" height="11" style="position:absolute;left:0;top:0"><path d="M2.2,5.2 L4.4,8 L8.8,1.8" fill="none" stroke="#555" stroke-width="1.7"/></svg></div><div class="t ovi" style="left:18px;top:349.7px">A-FLOR-HRAL</div><div class="ocb" style="left:5px;top:365.8px"><svg width="11" height="11" style="position:absolute;left:0;top:0"><path d="M2.2,5.2 L4.4,8 L8.8,1.8" fill="none" stroke="#555" stroke-width="1.7"/></svg></div><div class="t ovi" style="left:18px;top:366.8px">A-FLOR-OTLN</div><div class="ocb" style="left:5px;top:382.9px"><svg width="11" height="11" style="position:absolute;left:0;top:0"><path d="M2.2,5.2 L4.4,8 L8.8,1.8" fill="none" stroke="#555" stroke-width="1.7"/></svg></div><div class="t ovi" style="left:18px;top:383.9px">A-FLOR-STRS</div><div class="ocb" style="left:5px;top:400.0px"><svg width="11" height="11" style="position:absolute;left:0;top:0"><path d="M2.2,5.2 L4.4,8 L8.8,1.8" fill="none" stroke="#555" stroke-width="1.7"/></svg></div><div class="t ovi" style="left:18px;top:401.0px">A-FLOR-X</div><div class="abs" style="left:5px;top:260px;width:117px;height:2px;background:#fff"></div></div>
<!-- Legend -->
<div class="hdr" style="left:1475px;top:53px;width:235px"></div>
<div class="ptitle" style="left:1493px;top:62.5px">Legend</div><div class="abs" style="left:1492px;top:98.0px;width:27px;height:14px;background:#a9a9a9"></div><div class="t lg" style="left:1540px;top:98.5px">No Materials</div><div class="abs" style="left:1475px;top:120.0px;width:235px;height:1px;background:#e6e8eb"></div><div class="abs" style="left:1492px;top:129.5px;width:27px;height:14px;background:#5fbfbd"></div><div class="t lg" style="left:1540px;top:130.0px">Unknown</div><div class="abs" style="left:1475px;top:151.5px;width:235px;height:1px;background:#e6e8eb"></div><div class="abs" style="left:1492px;top:161.0px;width:27px;height:14px;background:#66fa66"></div><div class="t lg" style="left:1540px;top:161.5px">Not Listed</div><div class="abs" style="left:1475px;top:183.0px;width:235px;height:1px;background:#e6e8eb"></div><div class="abs" style="left:1492px;top:192.5px;width:27px;height:14px;background:#ffa865"></div><div class="t lg" style="left:1540px;top:193.0px">Hazardous</div><div class="abs" style="left:1475px;top:214.5px;width:235px;height:1px;background:#e6e8eb"></div><div class="abs" style="left:1492px;top:224.0px;width:27px;height:14px;background:#ff6666"></div><div class="t lg" style="left:1540px;top:224.5px">Extremely Hazardous</div><div class="abs" style="left:1475px;top:246.0px;width:235px;height:1px;background:#e6e8eb"></div><div class="dots" style="left:1469px;top:268px;width:6px;height:44px"></div>

<!-- Material locations -->
<div class="hdr" style="left:351px;top:509px;width:1364px"></div>
<div class="ptitle" style="left:369px;top:520.5px;letter-spacing:0.25px">Material Locations</div><div class="abs" style="left:351px;top:545px;width:1364px;height:69px;background:#f3f4f6"></div><div class="btn" style="left:505px;top:516px;width:41px;height:23px;line-height:23px">XLS</div><div class="btn" style="left:552px;top:516px;width:42px;height:23px;line-height:23px">PDF</div><div class="dots" style="left:1012px;top:502px;width:42px;height:5px"></div><div class="t mh" style="left:369px;top:573.0px">Tier 2</div><div class="t mh" style="left:369px;top:589.0px">Classification</div><svg class="abs" style="left:472px;top:589px" width="9" height="13"><path d="M0.5,5 L4,1.5 L7.5,5 Z M0.5,7 L4,10.5 L7.5,7 Z" fill="#b9bcc2"/></svg><div class="t mh" style="left:507px;top:557.0px">GHS</div><div class="t mh" style="left:507px;top:573.0px">Product</div><div class="t mh" style="left:507px;top:589.0px">Identifier</div><svg class="abs" style="left:563px;top:589px" width="9" height="13"><path d="M0.5,5 L4,1.5 L7.5,5 Z M0.5,7 L4,10.5 L7.5,7 Z" fill="#b9bcc2"/></svg><div class="t mh" style="left:598px;top:589.0px">Manufacturer</div><svg class="abs" style="left:679px;top:589px" width="9" height="13"><path d="M0.5,5 L4,1.5 L7.5,5 Z M0.5,7 L4,10.5 L7.5,7 Z" fill="#b9bcc2"/></svg><div class="t mh" style="left:713px;top:589.0px">Product Name</div><svg class="abs" style="left:953px;top:589px" width="9" height="13"><path d="M0.5,5 L4,1.5 L7.5,5 Z M0.5,7 L4,10.5 L7.5,7 Z" fill="#b9bcc2"/></svg><div class="t mh" style="left:988px;top:573.0px">Site</div><div class="t mh" style="left:988px;top:589.0px">Code</div><svg class="abs" style="left:1029px;top:589px" width="9" height="13"><path d="M0.5,5 L4,1.5 L7.5,5 Z M0.5,7 L4,10.5 L7.5,7 Z" fill="#b9bcc2"/></svg><div class="t mh" style="left:1063px;top:573.0px">Building</div><div class="t mh" style="left:1063px;top:589.0px">Code</div><svg class="abs" style="left:1113px;top:589px" width="9" height="13"><path d="M0.5,5 L4,1.5 L7.5,5 Z" fill="#2f8ff0"/><path d="M0.5,7 L4,10.5 L7.5,7 Z" fill="#b9bcc2"/></svg><div class="t mh" style="left:1148px;top:573.0px">Floor</div><div class="t mh" style="left:1148px;top:589.0px">Code</div><svg class="abs" style="left:1181px;top:589px" width="9" height="13"><path d="M0.5,5 L4,1.5 L7.5,5 Z" fill="#2f8ff0"/><path d="M0.5,7 L4,10.5 L7.5,7 Z" fill="#b9bcc2"/></svg><div class="t mh" style="left:1215px;top:573.0px">Room</div><div class="t mh" style="left:1215px;top:589.0px">Code</div><svg class="abs" style="left:1252px;top:589px" width="9" height="13"><path d="M0.5,5 L4,1.5 L7.5,5 Z" fill="#2f8ff0"/><path d="M0.5,7 L4,10.5 L7.5,7 Z" fill="#b9bcc2"/></svg><div class="t mh" style="left:1273px;top:589.0px">Quantity</div><svg class="abs" style="left:1326px;top:589px" width="9" height="13"><path d="M0.5,5 L4,1.5 L7.5,5 Z M0.5,7 L4,10.5 L7.5,7 Z" fill="#b9bcc2"/></svg><div class="t mh" style="left:1361px;top:573.0px">Quantity</div><div class="t mh" style="left:1361px;top:589.0px">Units</div><svg class="abs" style="left:1414px;top:589px" width="9" height="13"><path d="M0.5,5 L4,1.5 L7.5,5 Z M0.5,7 L4,10.5 L7.5,7 Z" fill="#b9bcc2"/></svg><div class="t mh" style="left:1449px;top:573.0px">Container</div><div class="t mh" style="left:1449px;top:589.0px">Category</div><svg class="abs" style="left:1508px;top:589px" width="9" height="13"><path d="M0.5,5 L4,1.5 L7.5,5 Z M0.5,7 L4,10.5 L7.5,7 Z" fill="#b9bcc2"/></svg><div class="t mh" style="left:1543px;top:573.0px">Container</div><div class="t mh" style="left:1543px;top:589.0px">Type</div><svg class="abs" style="left:1602px;top:589px" width="9" height="13"><path d="M0.5,5 L4,1.5 L7.5,5 Z M0.5,7 L4,10.5 L7.5,7 Z" fill="#b9bcc2"/></svg><div class="t mh" style="left:1624px;top:573.0px">Number of</div><div class="t mh" style="left:1624px;top:589.0px">Containers</div><svg class="abs" style="left:1688px;top:589px" width="9" height="13"><path d="M0.5,5 L4,1.5 L7.5,5 Z M0.5,7 L4,10.5 L7.5,7 Z" fill="#b9bcc2"/></svg><div class="t mh" style="left:1709px;top:589.0px">T</div><div class="abs" style="left:351px;top:613.5px;width:138px;height:30.5px;background:#ff6666"></div><div class="abs" style="left:351px;top:644.0px;width:1360px;height:1px;background:#e3e5e8"></div><div class="t md" style="left:369px;top:623.3px">Extremely Hazardous</div><div class="t md" style="left:598px;top:623.3px">Acme Inc.</div><div class="t md" style="left:714px;top:623.3px">Hydrogen Sulfide</div><div class="t md" style="left:988px;top:623.3px">BEDFORD</div><div class="t md" style="left:1064px;top:623.3px">SRL</div><div class="t md" style="left:1149px;top:623.3px">03</div><div class="t md" style="left:1216px;top:623.3px">302</div><div class="t md" style="left:1238px;top:623.3px;width:101px;text-align:right">10.00</div><div class="t md" style="left:1361px;top:623.3px">l</div><div class="t md" style="left:1449px;top:623.3px">USEPA-L</div><div class="t md" style="left:1600px;top:623.3px;width:100px;text-align:right">1</div><div class="abs" style="left:351px;top:645.0px;width:138px;height:30.5px;background:#5fbfbd"></div><div class="abs" style="left:351px;top:675.5px;width:1360px;height:1px;background:#e3e5e8"></div><div class="t md" style="left:369px;top:654.8px">Unknown</div><div class="t md" style="left:598px;top:654.8px">Acme Inc.</div><div class="t md" style="left:714px;top:654.8px">Hard Floor Sealer/Finish</div><div class="t md" style="left:988px;top:654.8px">BEDFORD</div><div class="t md" style="left:1064px;top:654.8px">SRL</div><div class="t md" style="left:1149px;top:654.8px">03</div><div class="t md" style="left:1216px;top:654.8px">314JAN</div><div class="t md" style="left:1238px;top:654.8px;width:101px;text-align:right">5.00</div><div class="t md" style="left:1361px;top:654.8px">l</div><div class="t md" style="left:1449px;top:654.8px"></div><div class="t md" style="left:1600px;top:654.8px;width:100px;text-align:right">1</div><div class="abs" style="left:351px;top:676.5px;width:138px;height:30.5px;background:#5fbfbd"></div><div class="abs" style="left:351px;top:707.0px;width:1360px;height:1px;background:#e3e5e8"></div><div class="t md" style="left:369px;top:686.3px">Unknown</div><div class="t md" style="left:598px;top:686.3px">Acme Inc.</div><div class="t md" style="left:714px;top:686.3px;letter-spacing:-0.7px">OLEIC ACID METHYL ESTER TECHNICAL GRADE</div><div class="t md" style="left:988px;top:686.3px">BEDFORD</div><div class="t md" style="left:1064px;top:686.3px">SRL</div><div class="t md" style="left:1149px;top:686.3px">03</div><div class="t md" style="left:1216px;top:686.3px">365</div><div class="t md" style="left:1238px;top:686.3px;width:101px;text-align:right">1.50</div><div class="t md" style="left:1361px;top:686.3px">l</div><div class="t md" style="left:1449px;top:686.3px">USEPA-M</div><div class="t md" style="left:1600px;top:686.3px;width:100px;text-align:right">1</div><div class="abs" style="left:351px;top:708.0px;width:138px;height:30.5px;background:#ffa865"></div><div class="abs" style="left:351px;top:738.5px;width:1360px;height:1px;background:#e3e5e8"></div><div class="t md" style="left:369px;top:717.8px">Hazardous</div><div class="t md" style="left:598px;top:717.8px">Acme Inc.</div><div class="t md" style="left:714px;top:717.8px">Benzene</div><div class="t md" style="left:988px;top:717.8px">BEDFORD</div><div class="t md" style="left:1064px;top:717.8px">SRL</div><div class="t md" style="left:1149px;top:717.8px">03</div><div class="t md" style="left:1216px;top:717.8px">365A</div><div class="t md" style="left:1238px;top:717.8px;width:101px;text-align:right">0.00</div><div class="t md" style="left:1361px;top:717.8px"></div><div class="t md" style="left:1449px;top:717.8px"></div><div class="t md" style="left:1600px;top:717.8px;width:100px;text-align:right">1</div><div class="abs" style="left:351px;top:739.5px;width:138px;height:12px;background:#5fbfbd"></div>
</body></html>
